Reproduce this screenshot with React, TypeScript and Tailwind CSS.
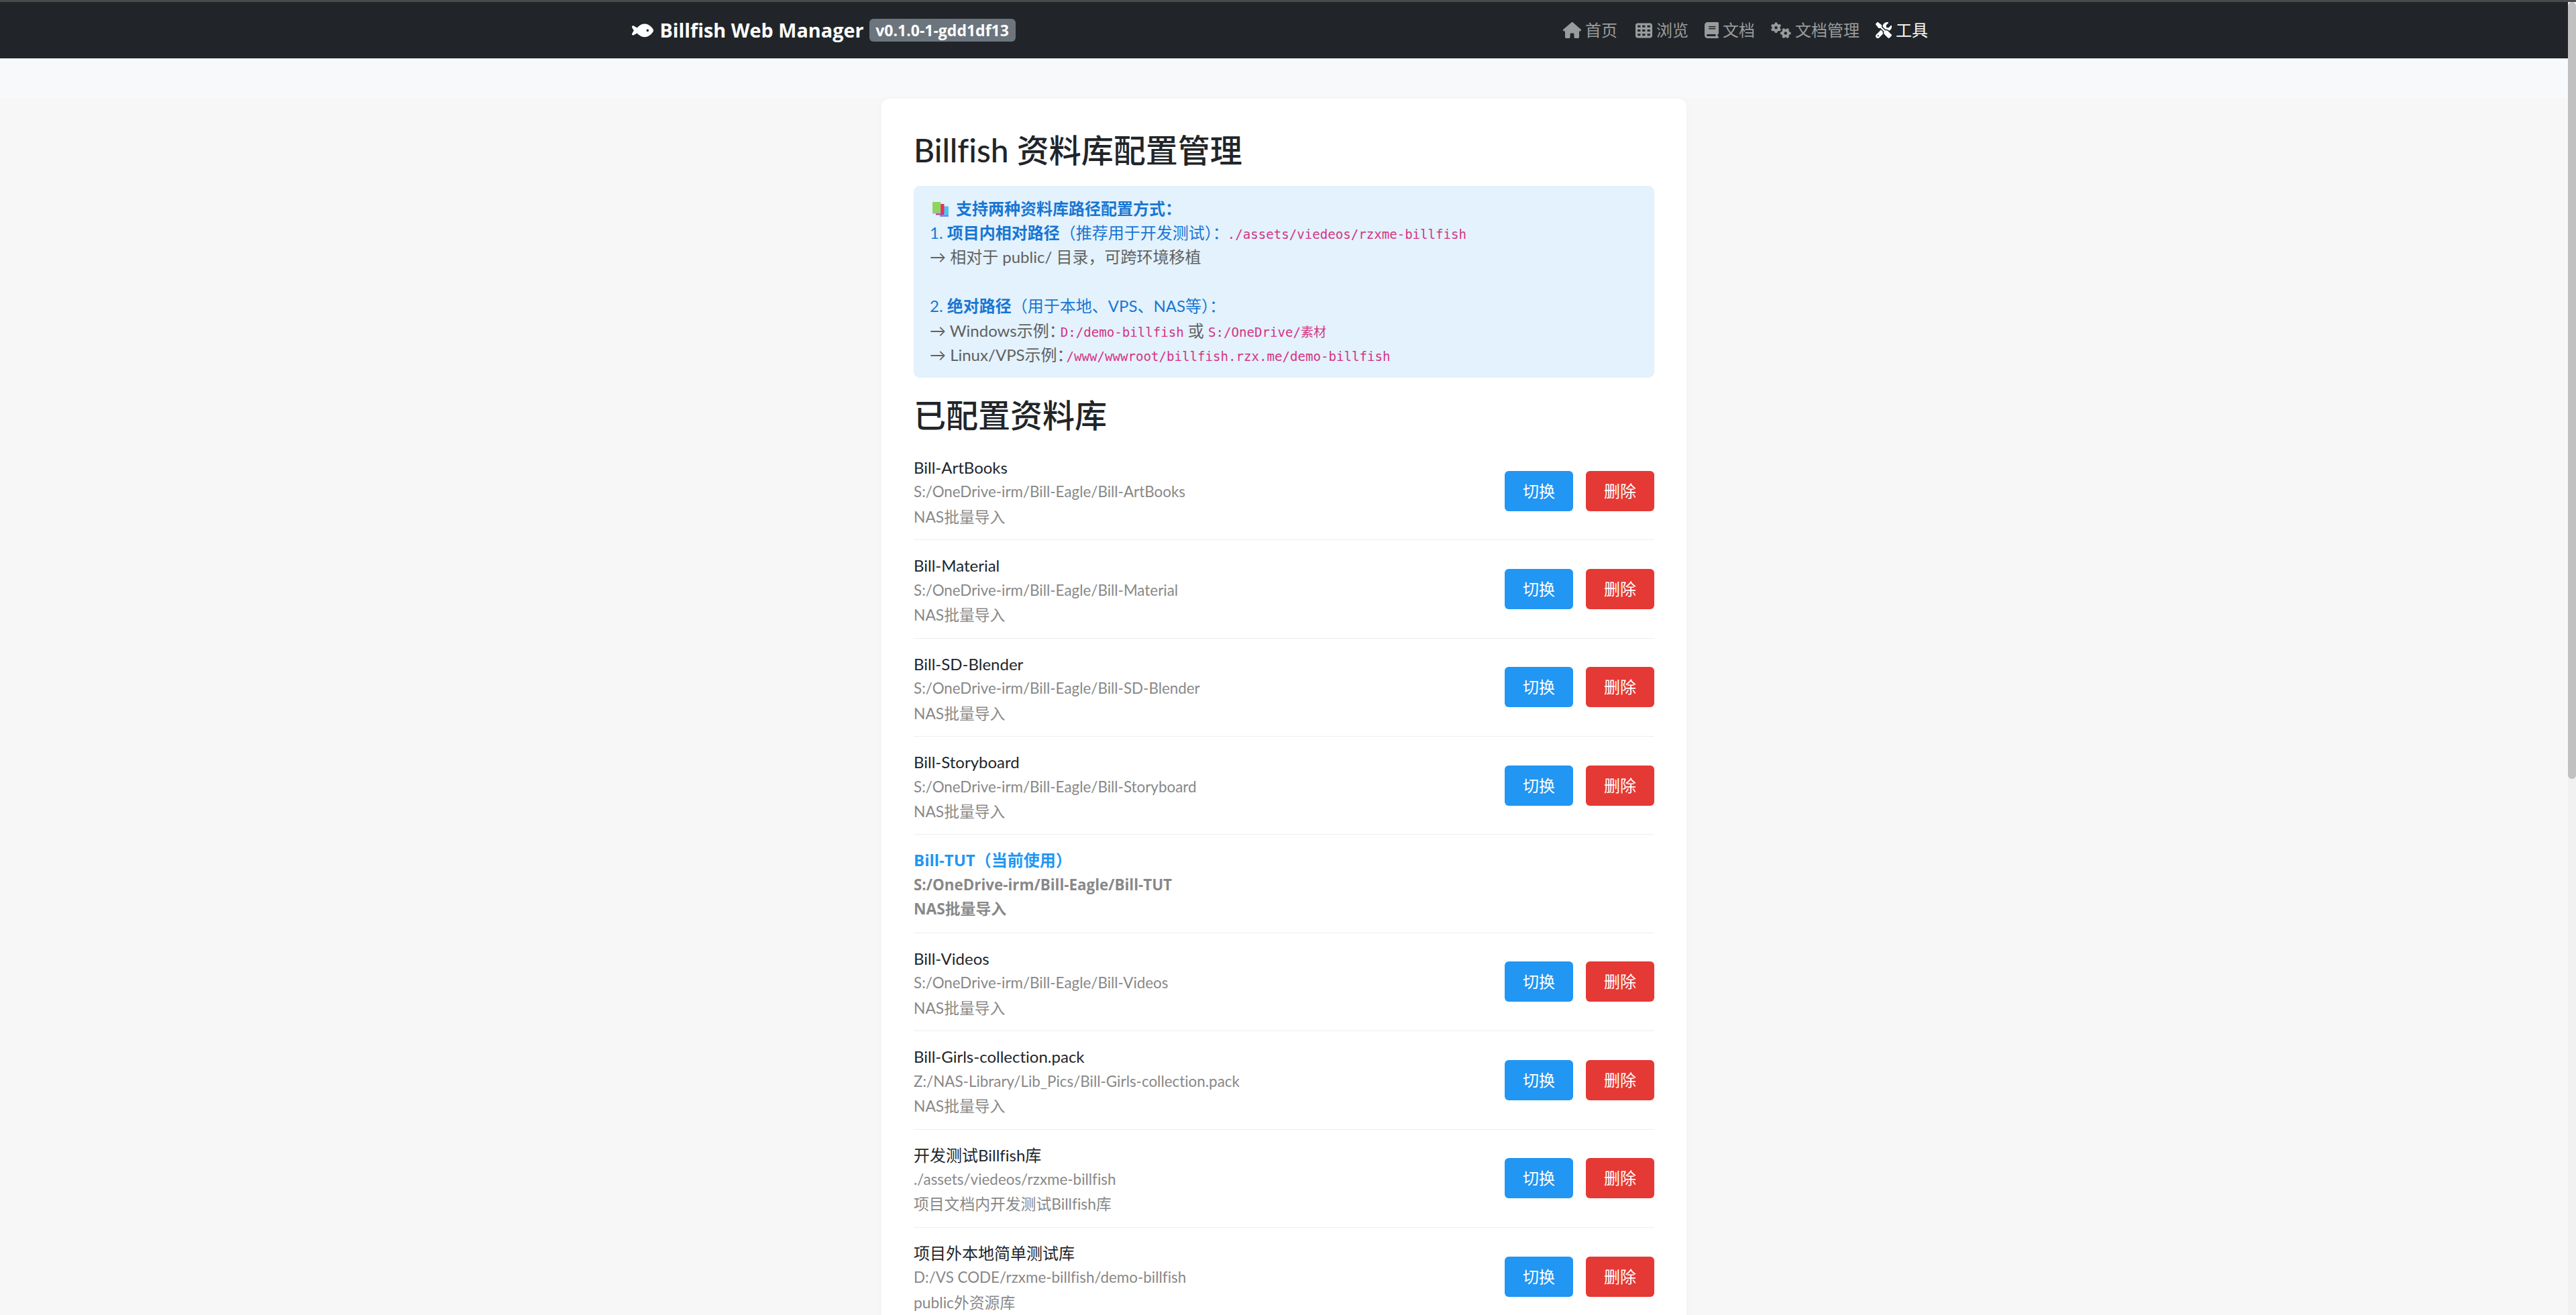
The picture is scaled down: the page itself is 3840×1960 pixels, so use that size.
import { FaFish, FaHouse, FaTableCells, FaBook, FaGears, FaScrewdriverWrench } from "react-icons/fa6";

const libs = [
  { name: "Bill-ArtBooks", path: "S:/OneDrive-irm/Bill-Eagle/Bill-ArtBooks", desc: "NAS批量导入" },
  { name: "Bill-Material", path: "S:/OneDrive-irm/Bill-Eagle/Bill-Material", desc: "NAS批量导入" },
  { name: "Bill-SD-Blender", path: "S:/OneDrive-irm/Bill-Eagle/Bill-SD-Blender", desc: "NAS批量导入" },
  { name: "Bill-Storyboard", path: "S:/OneDrive-irm/Bill-Eagle/Bill-Storyboard", desc: "NAS批量导入" },
  { name: "Bill-TUT（当前使用）", path: "S:/OneDrive-irm/Bill-Eagle/Bill-TUT", desc: "NAS批量导入", active: true },
  { name: "Bill-Videos", path: "S:/OneDrive-irm/Bill-Eagle/Bill-Videos", desc: "NAS批量导入" },
  { name: "Bill-Girls-collection.pack", path: "Z:/NAS-Library/Lib_Pics/Bill-Girls-collection.pack", desc: "NAS批量导入" },
  { name: "开发测试Billfish库", path: "./assets/viedeos/rzxme-billfish", desc: "项目文档内开发测试Billfish库" },
  { name: "项目外本地简单测试库", path: "D:/VS CODE/rzxme-billfish/demo-billfish", desc: "public外资源库" },
];

function Code({ children, className = "" }: { children: React.ReactNode; className?: string }) {
  return <code className={`font-['DejaVu_Sans_Mono','Noto_Sans_CJK_SC',monospace] text-[19.1px] leading-none text-[#d63384] ${className}`}>{children}</code>;
}

function NavItem({ icon, label, active, className = "" }: { icon: React.ReactNode; label: string; active?: boolean; className?: string }) {
  return (
    <a className={`flex items-center gap-[6px] ${active ? "text-white" : "text-[#9a9b9c]"} ${className}`}>
      {icon}
      <span>{label}</span>
    </a>
  );
}

function BooksEmoji() {
  return (
    <svg viewBox="0 0 24 22" className="inline-block ml-[4px] mr-[11px] w-[24px] h-[22px] align-[-3px]">
      <rect x="5" y="17" width="12" height="2.4" fill="#b0417f" />
      <rect x="11" y="19" width="13" height="3" fill="#7a86e0" />
      <rect x="17" y="6.5" width="7" height="13" fill="#4fc3f7" />
      <rect x="12" y="3" width="5.5" height="14" fill="#e6305f" />
      <rect x="0" y="0" width="12.3" height="15" rx="1" fill="#8fd45e" />
      <rect x="0" y="15" width="12.3" height="2.4" fill="#9fbcb0" />
    </svg>
  );
}

function Row({ name, path, desc, active, last }: { name: string; path: string; desc: string; active?: boolean; last?: boolean }) {
  return (
    <li className={`flex items-center justify-between py-[18px] ${last ? "" : "border-b border-[#eeeeee]"}`}>
      <div className={`mt-[2px] -mb-[2px] leading-[36.45px] ${active ? "font-bold font-['Open_Sans','Noto_Sans_CJK_SC',sans-serif]" : ""}`}>
        <div className={`text-[24px] ${active ? "text-[#2196f3]" : "text-[#212529]"}`}>{name}</div>
        <div className="text-[22.4px] text-[#888888]">{path}</div>
        <div className="text-[22.8px] text-[#888888]">{desc}</div>
      </div>
      {!active && (
        <div className="flex gap-[19px]">
          <button className="w-[102px] h-[60px] rounded-[6px] bg-[#2196f3] text-white text-[24px]">切换</button>
          <button className="w-[102px] h-[60px] rounded-[6px] bg-[#e53935] text-white text-[24px]">删除</button>
        </div>
      )}
    </li>
  );
}

export default function App() {
  return (
    <div className="h-[1960px] overflow-hidden flex bg-[#f7f7f7] [font-variant-ligatures:none] font-['Lato','Noto_Sans_CJK_SC',sans-serif]">
      <div className="flex-1 min-w-0 flex flex-col overflow-hidden">
        <div className="h-[3px] shrink-0 bg-[#4a4a4a]" />
        <header className="h-[84px] shrink-0 bg-[#212529] flex items-center justify-center">
          <div className="w-[1980px] px-[18px] flex items-center justify-between">
            <div className="flex items-center text-white font-bold text-[28.8px] font-['Open_Sans','Noto_Sans_CJK_SC',sans-serif]">
              <FaFish className="w-[32.4px] h-[28.8px] mr-[9px]" />
              <span>Billfish Web Manager</span>
              <span className="ml-[8px] h-[34px] w-[218px] justify-center rounded-[6px] bg-[#6c757d] text-[23px] flex items-center">v0.1.0-1-gdd1df13</span>
            </div>
            <nav className="flex items-center gap-[24px] pr-[12px] text-[24px]">
              <NavItem className="mr-[3px]" icon={<FaHouse className="w-[27px] h-[24px]" />} label="首页" />
              <NavItem icon={<FaTableCells className="w-[25px] h-[25px]" />} label="浏览" />
              <NavItem icon={<FaBook className="w-[21px] h-[24px]" />} label="文档" />
              <NavItem icon={<FaGears className="w-[30px] h-[24px]" />} label="文档管理" />
              <NavItem icon={<FaScrewdriverWrench className="w-[24px] h-[24px]" />} label="工具" active />
            </nav>
          </div>
        </header>
        <div className="h-[60px] shrink-0 bg-[#f8f9fa]" />
        <main className="w-[1200px] shrink-0 mx-auto bg-white rounded-t-[12px] px-[48px] pt-[48px] shadow-[0_0_8px_rgba(0,0,0,0.03)]">
          <h1 className="text-[48px] leading-[57.6px] text-[#212529] font-medium">Billfish 资料库配置管理</h1>
          <div className="mt-[24px] rounded-[9px] bg-[#e3f2fd] px-[24px] py-[16px] text-[24px] leading-[36.4px] text-[#616161]">
            <div className="text-[#1976d2] font-bold"><BooksEmoji />支持两种资料库路径配置方式：</div>
            <div className="text-[#1976d2]">1. <b>项目内相对路径</b>（推荐用于开发测试）：<Code className="-ml-[2px]">./assets/viedeos/rzxme-billfish</Code></div>
            <div>→ 相对于 public/ 目录，可跨环境移植</div>
            <div className="h-[36.4px]" />
            <div className="text-[#1976d2]">2. <b>绝对路径</b>（用于本地、VPS、NAS等）：</div>
            <div>→ Windows示例：<Code className="-ml-[7px]">D:/demo-billfish</Code> 或 <Code>S:/OneDrive/素材</Code></div>
            <div>→ Linux/VPS示例：<Code className="-ml-[10px]">/www/wwwroot/billfish.rzx.me/demo-billfish</Code></div>
          </div>
          <h2 className="mt-[27px] text-[48px] leading-[57.6px] text-[#212529] font-medium">已配置资料库</h2>
          <ul className="mt-[11px]">
            {libs.map((l, i) => (
              <Row key={l.name} {...l} last={i === libs.length - 1} />
            ))}
          </ul>
        </main>
      </div>
      <div className="w-[12px] shrink-0 bg-[#f1f1f1] flex flex-col">
        <div className="h-[3px] shrink-0 bg-[#4a4a4a]" />
        <div className="h-[1158px] shrink-0 rounded-full bg-[#c1c1c1]" />
      </div>
    </div>
  );
}
